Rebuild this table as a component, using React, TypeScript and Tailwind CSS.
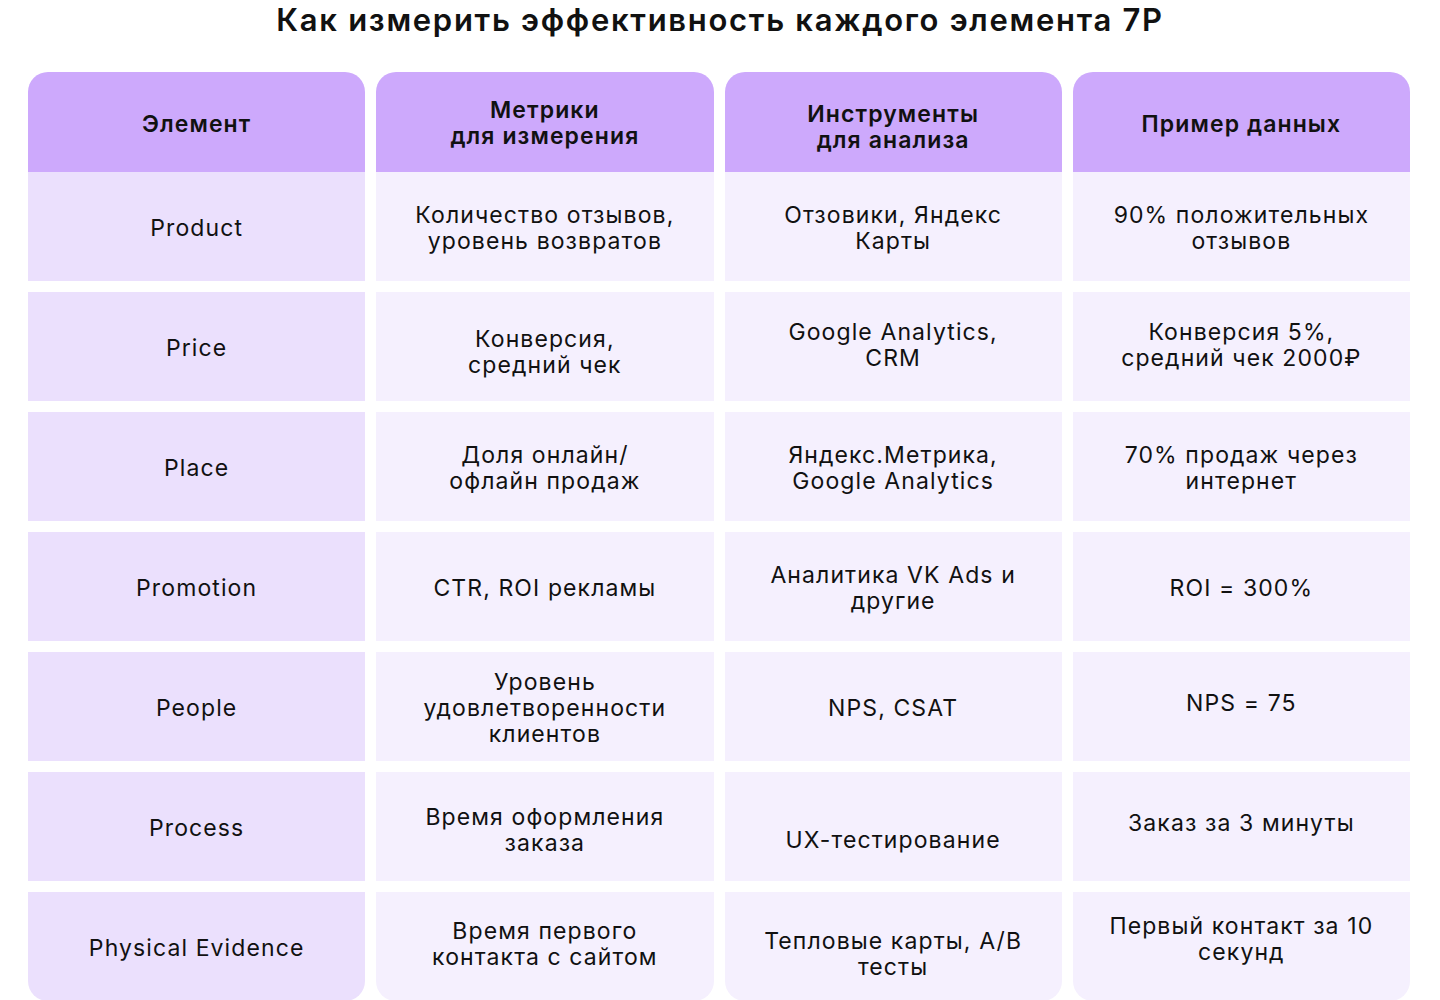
import React from "react";

type Cell = { t: string[]; c?: string };

const headers: Cell[] = [
  { t: ["Элемент"], c: "pt-[4px]" },
  { t: ["Метрики", "для измерения"], c: "pt-[2px]" },
  { t: ["Инструменты", "для анализа"], c: "pt-[10px]" },
  { t: ["Пример данных"], c: "pt-[4px]" },
];

const rows: Cell[][] = [
  [
    { t: ["Product"] },
    { t: ["Количество отзывов,", "уровень возвратов"] },
    { t: ["Отзовики, Яндекс", "Карты"] },
    { t: ["90% положительных", "отзывов"] },
  ],
  [
    { t: ["Price"] },
    { t: ["Конверсия,", "средний чек"], c: "pt-[10px]" },
    { t: ["Google Analytics,", "CRM"], c: "pb-[4px]" },
    { t: ["Конверсия 5%,", "средний чек 2000₽"], c: "pb-[4px]" },
  ],
  [
    { t: ["Place"] },
    { t: ["Доля онлайн/", "офлайн продаж"] },
    { t: ["Яндекс.Метрика,", "Google Analytics"] },
    { t: ["70% продаж через", "интернет"] },
  ],
  [
    { t: ["Promotion"] },
    { t: ["CTR, ROI рекламы"] },
    { t: ["Аналитика VK Ads и", "другие"] },
    { t: ["ROI = 300%"] },
  ],
  [
    { t: ["People"] },
    { t: ["Уровень", "удовлетворенности", "клиентов"] },
    { t: ["NPS, CSAT"] },
    { t: ["NPS = 75"], c: "pb-[8px]" },
  ],
  [
    { t: ["Process"] },
    { t: ["Время оформления", "заказа"], c: "pt-[6px]" },
    { t: ["UX-тестирование"], c: "pt-[26px]" },
    { t: ["Заказ за 3 минуты"], c: "pb-[8px]" },
  ],
  [
    { t: ["Physical Evidence"] },
    { t: ["Время первого", "контакта с сайтом"], c: "pb-[6px]" },
    { t: ["Тепловые карты, A/B", "тесты"], c: "pt-[14px]" },
    { t: ["Первый контакт за 10", "секунд"], c: "pb-[16px]" },
  ],
];

export default function App() {
  return (
    <div
      className="w-[1440px] h-[1000px] bg-white overflow-hidden text-[#111111]"
      style={{ fontFamily: "Inter, 'Noto Sans', sans-serif" }}
    >
      <h1 className="text-center text-[31px] leading-[40px] font-semibold tracking-[1.7px]">
        Как измерить эффективность каждого элемента 7P
      </h1>
      <div className="mt-[32px] ml-[28px] w-[1382px] grid grid-cols-4 gap-x-[11px]">
        {headers.map((h, i) => (
          <div
            key={i}
            className={
              "h-[100px] bg-[#cda9fc] rounded-t-[20px] flex flex-col items-center justify-center text-[23px] leading-[26px] font-semibold tracking-[1.1px] " +
              (h.c ?? "")
            }
          >
            {h.t.map((l, j) => (
              <div key={j}>{l}</div>
            ))}
          </div>
        ))}
        {rows.map((r, ri) => (
          <React.Fragment key={ri}>
            {r.map((cell, ci) => (
              <div
                key={ci}
                className={
                  "h-[109px] flex flex-col items-center justify-center text-center text-[23px] leading-[26px] tracking-[1.1px] " +
                  (ci === 0 ? "bg-[#ebe0fd] " : "bg-[#f5f0fe] ") +
                  (ri === rows.length - 1 ? "rounded-b-[20px] " : "") +
                  (ri > 0 ? "mt-[11px] " : "") +
                  (cell.c ?? "pt-[2px]")
                }
              >
                {cell.t.map((l, j) => (
                  <div key={j}>{l}</div>
                ))}
              </div>
            ))}
          </React.Fragment>
        ))}
      </div>
    </div>
  );
}
